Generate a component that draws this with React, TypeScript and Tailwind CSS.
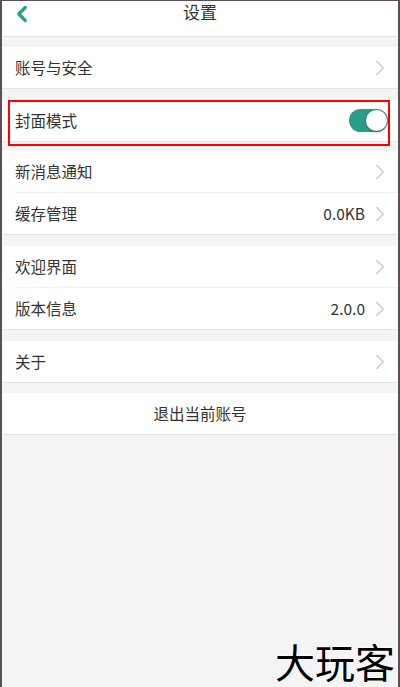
import React from 'react';
import { ChevronLeft, ChevronRight } from 'lucide-react';

const font = { fontFamily: '"Noto Sans CJK SC", "Noto Sans", sans-serif' };

function Row({ label, value, last = false }: { label: string; value?: string; last?: boolean }) {
  return (
    <div className={`relative flex h-[42px] items-center bg-white pl-[13px] pr-[5px] ${last ? 'border-b border-[#e4e4e4]' : ''}`}>
      <span className="flex-1 text-[15.5px] text-[#333]">{label}</span>
      {value && <span className="mr-[2px] text-[15.5px] text-[#333]">{value}</span>}
      <ChevronRight className="h-[26px] w-[26px] text-[#c8c8c8]" strokeWidth={1.2} />
      {!last && <div className="absolute bottom-0 left-[13px] right-0 h-px bg-[#f1f1f1]" />}
    </div>
  );
}

export default function App() {
  return (
    <div className="relative h-[687px] w-[400px] overflow-hidden border-x-2 border-t border-[#5e5050] bg-[#f4f4f4]" style={font}>
      <div className="relative flex h-[36px] items-center justify-center border-b border-[#e2e2e2] bg-white">
        <ChevronLeft className="absolute left-[7px] top-[0px] h-[26px] w-[26px] text-[#2a9d8a]" strokeWidth={3} />
        <span className="-mt-[13px] text-[17px] text-[#333]">设置</span>
      </div>

      <div className="mt-[10px]">
        <Row label="账号与安全" last />
      </div>

      <div className="relative mt-[11px]">
        <div className="flex h-[42px] items-center border-b border-[#e4e4e4] bg-white px-[13px]">
          <span className="flex-1 text-[15.5px] text-[#333]">封面模式</span>
          <div className="mr-[-3px] flex h-[23px] w-[39px] items-center justify-end rounded-full bg-[#2a9d8a] pr-[1px]">
            <div className="h-[21px] w-[21px] rounded-full bg-white shadow-[0_1px_3px_rgba(0,0,0,0.35)]" />
          </div>
        </div>
        <div className="pointer-events-none absolute left-[6px] right-[8px] top-0 z-10 h-[46px] border-2 border-[#ff0000]" />
      </div>

      <div className="mt-[9px]">
        <Row label="新消息通知" />
        <Row label="缓存管理" value="0.0KB" last />
      </div>

      <div className="mt-[11px]">
        <Row label="欢迎界面" />
        <Row label="版本信息" value="2.0.0" last />
      </div>

      <div className="mt-[11px]">
        <Row label="关于" last />
      </div>

      <div className="mt-[10px] flex h-[42px] items-center justify-center border-b border-[#e4e4e4] bg-white text-[15.5px] text-[#333]">
        退出当前账号
      </div>

      <div className="absolute bottom-[6px] right-[3px] text-[40px] leading-none text-black [text-shadow:0_0_2px_#fff,0_0_2px_#fff]">
        大玩客
      </div>
    </div>
  );
}
